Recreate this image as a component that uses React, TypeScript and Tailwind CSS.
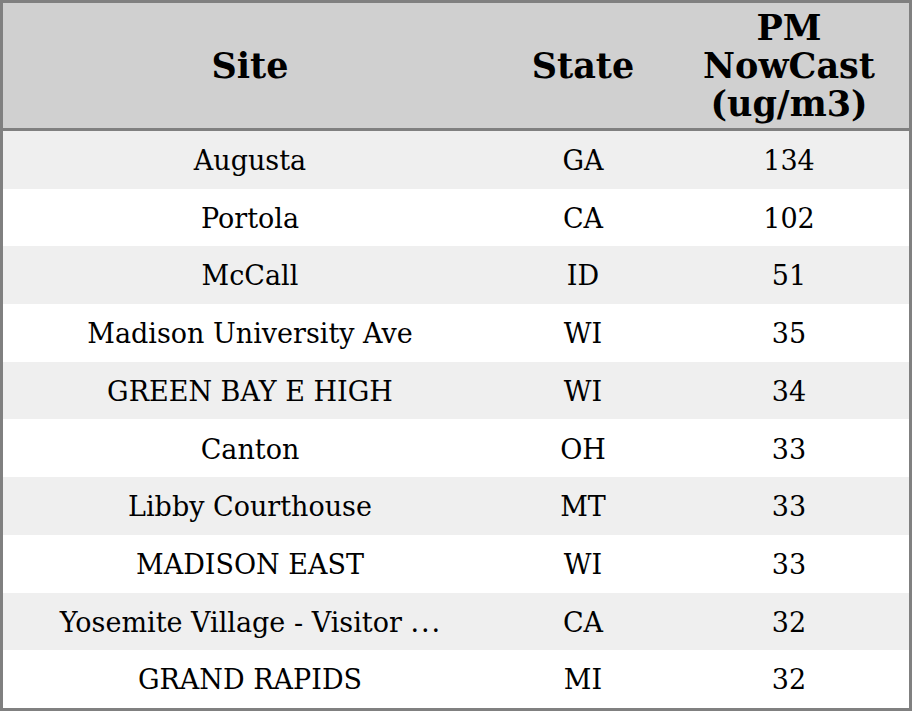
import React from "react";

const rows: [React.ReactNode, string, string][] = [
  ["Augusta", "GA", "134"],
  ["Portola", "CA", "102"],
  ["McCall", "ID", "51"],
  ["Madison University Ave", "WI", "35"],
  ["GREEN BAY E HIGH", "WI", "34"],
  ["Canton", "OH", "33"],
  ["Libby Courthouse", "MT", "33"],
  ["MADISON EAST", "WI", "33"],
  [
    <>
      Yosemite Village - Visitor <span className="tracking-[2px] mr-[-2px]">...</span>
    </>,
    "CA",
    "32",
  ],
  ["GRAND RAPIDS", "MI", "32"],
];

export default function App() {
  return (
    <div
      className="w-[912px] h-[711px] bg-white text-black"
      style={{ fontFamily: '"DejaVu Serif", serif' }}
    >
      <div className="w-[912px] border-[3px] border-[#808080] flex flex-col">
        <div className="h-[128px] bg-[#d0d0d0] border-b-[3px] border-[#808080] grid grid-cols-[494px_172px_240px] items-center font-bold text-[35px] leading-[38px] text-center">
          <div>Site</div>
          <div>State</div>
          <div>
            PM
            <br />
            NowCast
            <br />
            (ug/m3)
          </div>
        </div>
        {rows.map((r, i) => (
          <div
            key={i}
            className={
              i % 2 === 0
                ? "h-[57.7px] pt-[3px] bg-[#efefef] grid grid-cols-[494px_172px_240px] items-center text-center text-[27px]"
                : "h-[57.7px] pt-[3px] bg-white grid grid-cols-[494px_172px_240px] items-center text-center text-[27px]"
            }
          >
            <div>{r[0]}</div>
            <div>{r[1]}</div>
            <div>{r[2]}</div>
          </div>
        ))}
      </div>
    </div>
  );
}
